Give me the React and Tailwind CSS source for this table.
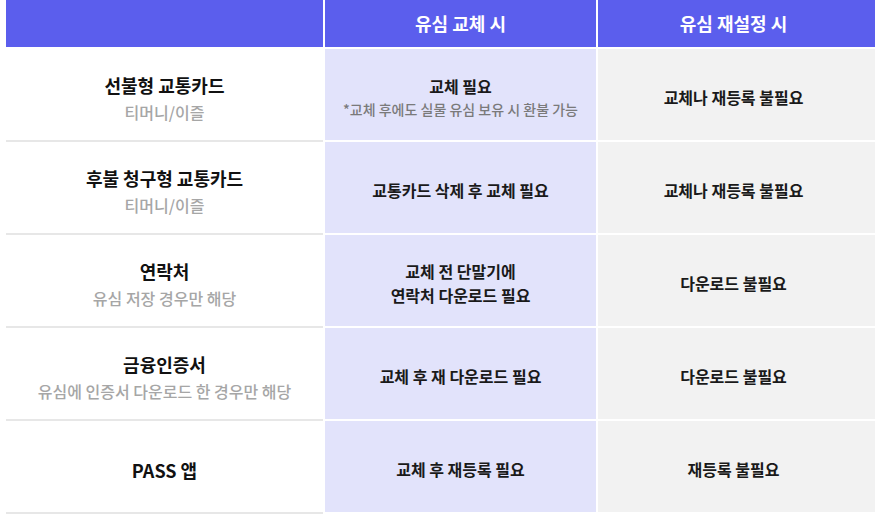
import React from 'react';

const rows = [
  {
    title: '선불형 교통카드',
    sub: '티머니/이즐',
    swap: ['교체 필요'],
    note: '*교체 후에도 실물 유심 보유 시 환불 가능',
    reset: '교체나 재등록 불필요',
  },
  {
    title: '후불 청구형 교통카드',
    sub: '티머니/이즐',
    swap: ['교통카드 삭제 후 교체 필요'],
    reset: '교체나 재등록 불필요',
  },
  {
    title: '연락처',
    sub: '유심 저장 경우만 해당',
    swap: ['교체 전 단말기에', '연락처 다운로드 필요'],
    reset: '다운로드 불필요',
  },
  {
    title: '금융인증서',
    sub: '유심에 인증서 다운로드 한 경우만 해당',
    swap: ['교체 후 재 다운로드 필요'],
    reset: '다운로드 불필요',
  },
  {
    title: 'PASS 앱',
    swap: ['교체 후 재등록 필요'],
    reset: '재등록 불필요',
  },
];

const font = { fontFamily: '"Noto Sans CJK KR", "Noto Sans", sans-serif' };

export default function App() {
  return (
    <div className="w-[875px] h-[518px] bg-white overflow-hidden" style={font}>
      <div className="ml-[6px]">
        {/* header */}
        <div className="grid grid-cols-[317px_271px_1fr] gap-x-[2px] h-[47px] mb-[2px]">
          <div className="bg-[#5b5eed]" />
          <div className="bg-[#5b5eed] flex items-center justify-center text-white font-bold text-[18px]">
            유심 교체 시
          </div>
          <div className="bg-[#5b5eed] flex items-center justify-center pr-[6px] text-white font-bold text-[18px]">
            유심 재설정 시
          </div>
        </div>

        {rows.map((r) => (
          <div key={r.title} className="grid grid-cols-[317px_271px_1fr] gap-x-[2px] h-[93px]">
            <div className="border-b-2 border-[#e7e7e7] flex flex-col items-center justify-center pt-[6px]">
              <div className="text-[18px] leading-[28px] font-bold text-[#111]">{r.title}</div>
              {r.sub && (
                <div className="text-[16px] leading-[26px] font-medium text-[#a6a6a6]">{r.sub}</div>
              )}
            </div>
            <div className="h-[91px] bg-[#e2e3fb] flex flex-col items-center justify-center pt-[5px] text-center">
              {r.swap.map((t) => (
                <div key={t} className="text-[16px] leading-[24px] font-bold text-[#1a1a1a]">
                  {t}
                </div>
              ))}
              {r.note && (
                <div className="text-[14px] leading-[22px] font-medium text-[#7a7a7a]">{r.note}</div>
              )}
            </div>
            <div className="h-[91px] bg-[#f2f2f2] flex items-center justify-center pt-[5px] pr-[6px]">
              <div className="text-[16px] leading-[24px] font-bold text-[#1a1a1a]">{r.reset}</div>
            </div>
          </div>
        ))}
      </div>
    </div>
  );
}
